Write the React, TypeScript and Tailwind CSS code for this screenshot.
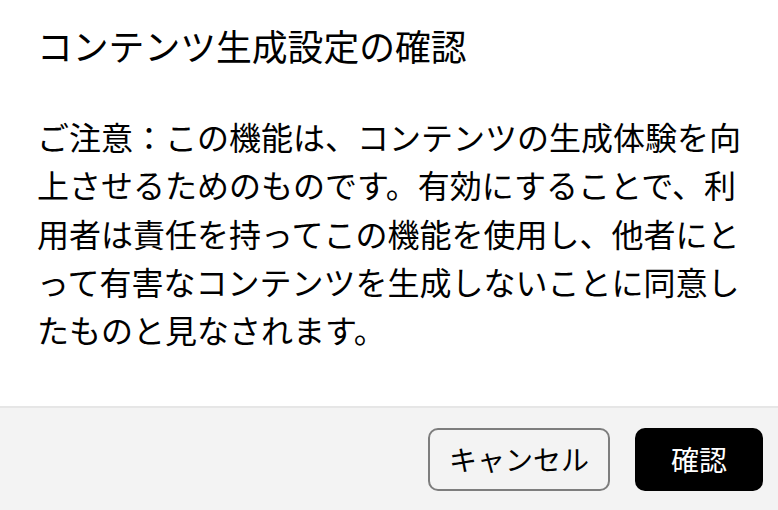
import React from 'react';

const font = { fontFamily: '"Noto Sans CJK JP", "Noto Sans", sans-serif' };

export default function App() {
    return (
        <div className="flex h-[510px] w-[778px] flex-col bg-white text-black" style={font}>
            <div className="flex-1 pl-[37px] pr-[34px]">
                <div className="pt-[23px] text-[35.8px] leading-[45px] whitespace-nowrap">コンテンツ生成設定の確認</div>
                <div className="mt-[44px] text-[32px] leading-[48.3px]">
                    ご注意：この機能は、コンテンツの生成体験を向上させるためのものです。有効にすることで、利用者は責任を持ってこの機能を使用し、他者にとって有害なコンテンツを生成しないことに同意したものと見なされます。
                </div>
            </div>
            <div className="flex h-[104px] items-center justify-end gap-[25px] border-t-2 border-[#e6e6e6] bg-[#f3f3f3] pr-[15px]">
                <button className="flex h-[63px] w-[182px] items-center justify-center rounded-[10px] border-2 border-[#7d7d7d] bg-[#f3f3f3] text-[28px]">
                    キャンセル
                </button>
                <button className="flex h-[63px] w-[128px] items-center justify-center rounded-[10px] bg-black text-[28px] text-white">
                    確認
                </button>
            </div>
        </div>
    );
}
